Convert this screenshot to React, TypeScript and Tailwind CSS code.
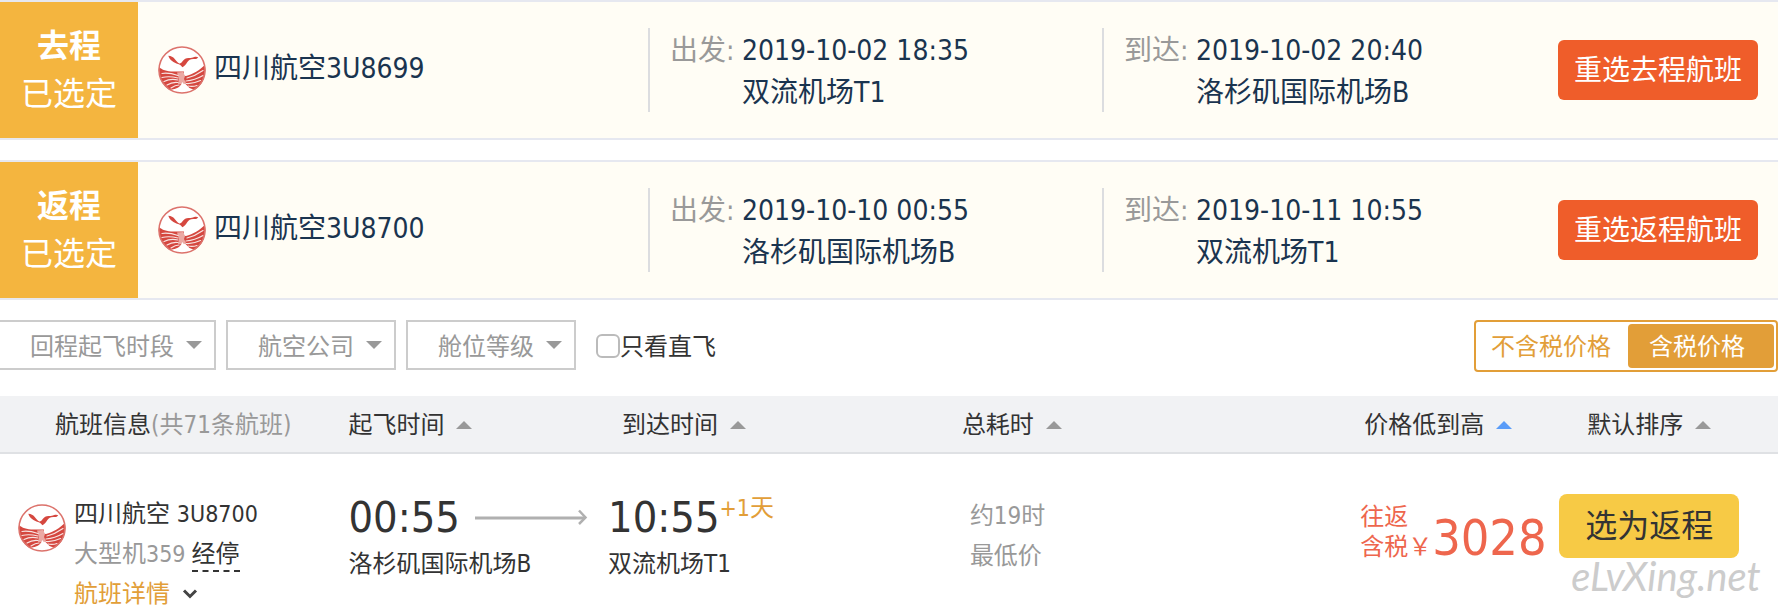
import { useState } from "react";

type Trip = {
  title: string;
  flight: string;
  departTime: string;
  departAirport: string;
  arriveTime: string;
  arriveAirport: string;
  action: string;
};

const trips: Trip[] = [
  {
    title: "去程",
    flight: "四川航空3U8699",
    departTime: "2019-10-02 18:35",
    departAirport: "双流机场T1",
    arriveTime: "2019-10-02 20:40",
    arriveAirport: "洛杉矶国际机场B",
    action: "重选去程航班",
  },
  {
    title: "返程",
    flight: "四川航空3U8700",
    departTime: "2019-10-10 00:55",
    departAirport: "洛杉矶国际机场B",
    arriveTime: "2019-10-11 10:55",
    arriveAirport: "双流机场T1",
    action: "重选返程航班",
  },
];

const AirlineLogo = () => (
  <svg className="size-12 shrink-0" viewBox="0 0 48 48" fill="none" aria-hidden="true">
    <circle cx="24" cy="24" r="23" fill="#fff" />
    {/* sea */}
    <path
      d="M1 21c3 3 9 5 17 4.500l8 0-1 4 3 .5C35 28 42 24 46.800 19A23.500 23.500 0 0 1 36.500 44l-5-2-5-5-5 5-10 2A23.500 23.500 0 0 1 1 21z"
      fill="#d5473f"
    />
    <path d="M19 26.500l6-.5 2 4-1 3 2 4-3 1.500-5-.5 1-5z" fill="#eba9a4" />
    <g stroke="#fff" strokeWidth="1.200" strokeLinecap="round" opacity=".85">
      <path d="M4 27.500c6-1 10 0 16 2" />
      <path d="M4 31.500c6-1.500 10-1 16 .5" />
      <path d="M6 35.500c5-2.500 9-2.500 14-1.500" />
      <path d="M9 39c4-2.500 7-3 11-2.500" />
      <path d="M13 42c3-2 5-3 8-3" />
      <path d="M29 32c6-1.500 11-4 16-7.500" />
      <path d="M28 35c6-.5 11-2 17-5.500" />
      <path d="M28 37.500c5 .5 9-.5 14.500-3" />
      <path d="M30 40c4 .8 6 .5 9-.5" />
    </g>
    {/* foam */}
    <path d="M24.500 36c1.500 3.500 4 5.500 8 7.500-4 3-12.500 3-17 0 4-1 7.500-3.500 9-7.500z" fill="#fff" />
    {/* gull */}
    <path
      d="M10.300 9.800c3 .2 4.800 1.200 6.200 3 1.400 1.800 2.700 3.400 4.700 4.700 1.400.2 2.400-.8 3.300-2.200 1.800-2.700 4.400-3.800 7.500-3.300 2 .3 3.500-.9 5.200-1.200 1-.2 2.200 0 3 .4-.8 1.700-2.600 1.800-4.400 1.700-3.200-.1-5 .8-6.400 3.100-1.200 2-2.800 4-5 5.200-1-1.600-2.400-2.400-4.400-3.200-4-1.300-8.500-3.900-9.700-8.200z"
      fill="#d5473f"
    />
    <circle cx="24" cy="24" r="23" stroke="#dc726b" strokeWidth="1.600" />
  </svg>
);

const Triangle = ({ down = false, className = "text-[#999]" }: { down?: boolean; className?: string }) => (
  <svg className={className} width="16" height="8" viewBox="0 0 16 8" fill="currentColor" aria-hidden="true">
    <path d={down ? "M0 0h16L8 8z" : "M0 8h16L8 0z"} />
  </svg>
);

const Leg = ({ label, time, airport }: { label: string; time: string; airport: string }) => (
  <dl className="grid h-21 grid-cols-[72px_1fr] content-center border-l-2 border-[#dcdde0] pt-1 pl-5 text-[28px] leading-[42px]">
    <dt className="text-[#999]">{label}:</dt>
    <dd>{time}</dd>
    <dd className="col-start-2">{airport}</dd>
  </dl>
);

const TripCard = ({ trip }: { trip: Trip }) => (
  <section className="grid grid-cols-[138px_510fr_454fr_454fr_222px] items-center border-y-2 border-[#e6e8f0] bg-[#fffdf5] text-[#1a344f]">
    <div className="flex h-34 flex-col justify-center bg-[#f4b53f] text-center text-[32px] leading-12 text-white">
      <strong>{trip.title}</strong>
      <span>已选定</span>
    </div>
    <div className="flex items-center gap-2 pl-5">
      <AirlineLogo />
      <span className="pb-0.5 text-[28px]">{trip.flight}</span>
    </div>
    <Leg label="出发" time={trip.departTime} airport={trip.departAirport} />
    <Leg label="到达" time={trip.arriveTime} airport={trip.arriveAirport} />
    <button className="mr-5 ml-0.5 h-15 rounded-md bg-[#ef5d2a] pt-0.5 text-[28px] text-white">{trip.action}</button>
  </section>
);

const FilterSelect = ({ label, className }: { label: string; className: string }) => (
  <div className={`relative h-[50px] border-2 border-[#ccc] ${className}`}>
    <select
      aria-label={label}
      className="size-full appearance-none bg-transparent pt-1 pl-[30px] text-[#999] outline-none"
    >
      <option>{label}</option>
    </select>
    <span className="pointer-events-none absolute inset-y-0 right-3 flex items-center">
      <Triangle down />
    </span>
  </div>
);

const SortHeader = ({ label, active = false }: { label: string; active?: boolean }) => (
  <button className="flex items-center gap-3">
    {label}
    <Triangle className={active ? "text-[#5a9cf8]" : "text-[#999]"} />
  </button>
);

const App = () => {
  const [directOnly, setDirectOnly] = useState(false);
  const [withTax, setWithTax] = useState(true);

  const tabOn = "bg-[#e29e38] text-white";
  const tabOff = "text-[#e29e38]";

  return (
    <main className="overflow-hidden bg-white font-['DejaVu_Sans_Condensed','Noto_Sans_CJK_SC',sans-serif] text-2xl text-[#333]">
      <div className="flex flex-col gap-5">
        {trips.map((trip) => (
          <TripCard key={trip.title} trip={trip} />
        ))}
      </div>

      {/* Filters */}
      <div className="mt-5 flex items-start">
        <div className="flex gap-[10px]">
          <FilterSelect label="回程起飞时段" className="w-[216px] border-l-0" />
          <FilterSelect label="航空公司" className="w-[170px]" />
          <FilterSelect label="舱位等级" className="w-[170px]" />
        </div>
        <label className="ml-5 flex h-[52px] items-center">
          <input
            type="checkbox"
            checked={directOnly}
            onChange={(e) => setDirectOnly(e.target.checked)}
            className="size-6 appearance-none rounded-md border-2 border-[#bbb] bg-white checked:bg-[#e29e38]"
          />
          <span className="pt-0.5">只看直飞</span>
        </label>
        <div className="ml-auto flex h-[52px] rounded border-2 border-[#e29e38] p-0.5">
          <button
            onClick={() => setWithTax(false)}
            className={`w-[150px] rounded pt-0.5 pr-1 ${withTax ? tabOff : tabOn}`}
          >
            不含税价格
          </button>
          <button
            onClick={() => setWithTax(true)}
            className={`w-[146px] rounded pt-0.5 pr-2 ${withTax ? tabOn : tabOff}`}
          >
            含税价格
          </button>
        </div>
      </div>

      {/* Flight list */}
      <table className="mt-6 w-full table-fixed border-collapse text-left">
        <colgroup>
          <col className="w-[19.6%]" />
          <col className="w-[14.6%]" />
          <col className="w-[19.9%]" />
          <col className="w-[22.4%]" />
          <col className="w-[11.2%]" />
          <col />
        </colgroup>
        <thead>
          <tr className="h-[57px] border-b-2 border-[#dfe1e4] bg-[#f1f2f4] whitespace-nowrap">
            <th className="p-0 pt-0.5 pl-[55px] font-normal">
              航班信息<span className="text-[#999]">(共71条航班)</span>
            </th>
            <th className="p-0 pt-0.5 font-normal">
              <SortHeader label="起飞时间" />
            </th>
            <th className="p-0 pt-0.5 pl-[14px] font-normal">
              <SortHeader label="到达时间" />
            </th>
            <th className="p-0 pt-0.5 font-normal">
              <SortHeader label="总耗时" />
            </th>
            <th className="p-0 pt-0.5 pl-1 font-normal">
              <SortHeader label="价格低到高" active />
            </th>
            <th className="p-0 pt-0.5 pl-7 font-normal">
              <SortHeader label="默认排序" />
            </th>
          </tr>
        </thead>
        <tbody>
          <tr className="align-top whitespace-nowrap">
            <td className="p-0 pt-10 pl-[18px]">
              <div className="flex gap-2">
                <div className="pt-[10px]">
                  <AirlineLogo />
                </div>
                <div className="leading-10">
                  <p>
                    四川航空 <span className="text-[23px]">3U8700</span>
                  </p>
                  <p className="flex gap-1.5 text-[#999]">
                    <span>
                      大型机<span className="text-[23px]">359</span>
                    </span>
                    <span className="h-[38px] border-b-2 border-dashed border-[#333] text-[#333]">经停</span>
                  </p>
                  <button className="flex items-center gap-2 text-[#e29e38]">
                    航班详情
                    <svg width="16" height="10" viewBox="0 0 16 10" fill="none" stroke="#444" strokeWidth="3" className="ml-1">
                      <path d="M2 1.500 8 7.500 14 1.500" />
                    </svg>
                  </button>
                </div>
              </div>
            </td>
            <td className="p-0 pt-9">
              <div className="flex items-center gap-[14px]">
                <time className="text-[43px] leading-[54px]">00:55</time>
                <svg width="114" height="16" viewBox="0 0 114 16" fill="none" stroke="#b0b0b0" aria-hidden="true">
                  <path d="M1 9h109" strokeWidth="3" />
                  <path d="M105 1.500l6.500 7L105 15" strokeWidth="2.500" />
                </svg>
              </div>
              <p className="leading-10">洛杉矶国际机场B</p>
            </td>
            <td className="p-0 pt-9">
              <div className="flex">
                <time className="text-[43px] leading-[54px]">10:55</time>
                <span className="leading-9 text-[#e29e38]">
                  <span className="text-[23px]">+1</span>天
                </span>
              </div>
              <p className="leading-10">双流机场T1</p>
            </td>
            <td className="p-0 pt-[42px] pl-2 leading-10 text-[#999]">
              <p>约19时</p>
              <p>最低价</p>
            </td>
            <td className="p-0 pt-12 text-[#ee664d]">
              <div className="flex items-end leading-[30px]">
                <p>
                  往返
                  <br />
                  含税￥
                </p>
                <strong className="text-[50px] leading-12 font-normal">3028</strong>
              </div>
            </td>
            <td className="p-0 pt-10">
              <div className="flex flex-col items-start">
                <button className="h-16 w-[180px] rounded-lg bg-[#f7ca45] text-[32px]">选为返程</button>
                <a href="#top" className="ml-3 font-['Lato',cursive] text-[40px] leading-9 text-[#ccc] italic">
                  eLvXing.net
                </a>
              </div>
            </td>
          </tr>
        </tbody>
      </table>
    </main>
  );
};

export default App;
